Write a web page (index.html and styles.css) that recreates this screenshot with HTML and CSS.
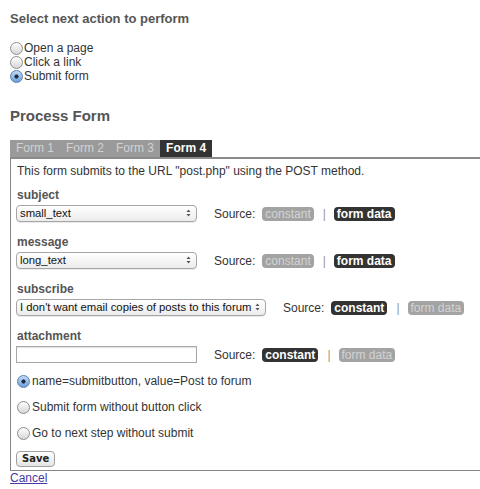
FILE: index.html
```html
<!DOCTYPE html>
<html>
<head>
<meta charset="utf-8">
<link rel="stylesheet" href="styles.css">
</head>
<body>
<h3 class="title">Select next action to perform</h3>
<div class="actions">
  <label class="opt"><input type="radio" name="act">Open a page</label>
  <label class="opt"><input type="radio" name="act">Click a link</label>
  <label class="opt"><input type="radio" name="act" checked>Submit form</label>
</div>

<h2 class="heading">Process Form</h2>
<div class="tabs">
  <span class="tab">Form 1</span>
  <span class="tab">Form 2</span>
  <span class="tab">Form 3</span>
  <span class="tab active">Form 4</span>
</div>
<div class="panel">
  <p class="intro">This form submits to the URL "post.php" using the POST method.</p>

  <div class="field">
    <div class="label">subject</div>
    <div class="row">
      <div class="select short">
        <select><option>small_text</option></select>
        <svg class="arrows" width="5" height="8" viewBox="0 0 5 8"><path d="M0.5 3 L2.5 0.5 L4.5 3 Z M0.5 5 L2.5 7.5 L4.5 5 Z" fill="#555"/></svg>
      </div>
      <span class="source">Source:</span>
      <span class="badge">constant</span><span class="sep">|</span><span class="badge on">form data</span>
    </div>
  </div>

  <div class="field">
    <div class="label">message</div>
    <div class="row">
      <div class="select short">
        <select><option>long_text</option></select>
        <svg class="arrows" width="5" height="8" viewBox="0 0 5 8"><path d="M0.5 3 L2.5 0.5 L4.5 3 Z M0.5 5 L2.5 7.5 L4.5 5 Z" fill="#555"/></svg>
      </div>
      <span class="source">Source:</span>
      <span class="badge">constant</span><span class="sep">|</span><span class="badge on">form data</span>
    </div>
  </div>

  <div class="field">
    <div class="label">subscribe</div>
    <div class="row">
      <div class="select long">
        <select><option>I don't want email copies of posts to this forum</option></select>
        <svg class="arrows" width="5" height="8" viewBox="0 0 5 8"><path d="M0.5 3 L2.5 0.5 L4.5 3 Z M0.5 5 L2.5 7.5 L4.5 5 Z" fill="#555"/></svg>
      </div>
      <span class="source">Source:</span>
      <span class="badge on">constant</span><span class="sep">|</span><span class="badge">form data</span>
    </div>
  </div>

  <div class="field">
    <div class="label">attachment</div>
    <div class="row">
      <input class="text" type="text">
      <span class="source">Source:</span>
      <span class="badge on">constant</span><span class="sep">|</span><span class="badge">form data</span>
    </div>
  </div>

  <div class="submits">
    <label class="opt"><input type="radio" name="sub" checked>name=submitbutton, value=Post to forum</label>
    <label class="opt"><input type="radio" name="sub">Submit form without button click</label>
    <label class="opt"><input type="radio" name="sub">Go to next step without submit</label>
  </div>

  <button class="save" type="button">Save</button>
</div>
<a class="cancel" href="#">Cancel</a>
</body>
</html>
```

FILE: styles.css
```css
body {
  margin: 0;
  padding: 11px 0 0 10px;
  font-family: "Liberation Sans", Arial, sans-serif;
  font-size: 12px;
  color: #333;
  background: #fff;
}

.title {
  margin: 0;
  font-size: 13px;
  line-height: 16px;
  font-weight: bold;
  color: #555;
}

.actions {
  margin-top: 14px;
  display: flex;
  flex-direction: column;
}

.opt {
  display: flex;
  align-items: center;
  height: 14px;
  line-height: 14px;
  font-size: 12px;
  color: #333;
}

.opt input {
  appearance: none;
  -webkit-appearance: none;
  box-sizing: border-box;
  width: 13px;
  height: 13px;
  margin: 0 1px 0 0;
  border-radius: 50%;
  border: 1px solid #8e8e8e;
  background: linear-gradient(#ffffff, #d6d6d6);
  flex: none;
}

.opt input:checked {
  border-color: #5b7fae;
  background:
    radial-gradient(circle, #1d2b40 0 1.7px, transparent 2.4px),
    linear-gradient(#c3dbf6, #6b9fdc);
}

.heading {
  margin: 24px 0 0;
  font-size: 15px;
  line-height: 18px;
  font-weight: bold;
  color: #555;
}

.tabs {
  margin-top: 15px;
  display: flex;
  width: max-content;
  background: #9a9a9a;
}

.tab {
  padding: 0 6px;
  line-height: 17px;
  color: #d2d2d2;
}

.tab.active {
  background: #333;
  color: #fff;
  font-weight: bold;
}

.panel {
  border: 1px solid #858585;
  border-top: 2px solid #8a8a8a;
  border-right: 0;
  padding: 4px 0 3px 6px;
}

.intro {
  margin: 0;
  line-height: 16px;
}

.field {
  margin-top: 12px;
}

.intro + .field {
  margin-top: 8px;
}

.label {
  font-weight: bold;
  color: #555;
  line-height: 16px;
}

.row {
  margin-top: 2px;
  display: flex;
  align-items: center;
  height: 17px;
  margin-left: -1px;
}

.select {
  position: relative;
  flex: none;
}

.select.short { width: 181px; }
.select.long { width: 250px; }

.select select {
  appearance: none;
  -webkit-appearance: none;
  box-sizing: border-box;
  width: 100%;
  height: 17px;
  margin: 0;
  padding: 0 12px 0 3px;
  border: 1px solid #a6a6a6;
  border-radius: 4px;
  background: linear-gradient(#ffffff, #ececec);
  font-family: "Liberation Sans", Arial, sans-serif;
  font-size: 11.3px;
  line-height: 15px;
  color: #111;
  box-shadow: 0 1px 0 rgba(0,0,0,0.08);
}

.arrows {
  position: absolute;
  right: 6px;
  top: 4px;
  pointer-events: none;
}

.text {
  box-sizing: border-box;
  width: 181px;
  height: 17px;
  margin: 0;
  border: 1px solid #a8a8a8;
  box-shadow: inset 0 1px 1px rgba(0,0,0,0.12);
  background: #fff;
  flex: none;
}

.source {
  margin-left: 17px;
  margin-right: 7px;
}

.badge {
  padding: 0 3px;
  line-height: 14px;
  border-radius: 4px;
  background: #a3a3a3;
  color: #d3d3d3;
}

.badge.on {
  background: #333;
  color: #fff;
  font-weight: bold;
}

.sep {
  margin: 0 8px 0 9px;
  color: #999;
}

.submits {
  margin-top: 11px;
  display: flex;
  flex-direction: column;
  gap: 12px;
}

.submits .opt input {
  margin-right: 2px;
}

.save {
  margin-top: 11px;
  display: block;
  height: 16px;
  padding: 0 5px;
  border: 1px solid #a0a0a0;
  border-radius: 4px;
  background: linear-gradient(#ffffff, #e4e4e4);
  font-family: "DejaVu Sans", sans-serif;
  font-size: 10px;
  font-weight: bold;
  line-height: 14px;
  color: #222;
  margin-left: -1px;
}

.cancel {
  display: block;
  width: max-content;
  line-height: 15px;
  margin-top: 0;
  color: #4a3aa0;
  text-decoration: underline;
}
```
